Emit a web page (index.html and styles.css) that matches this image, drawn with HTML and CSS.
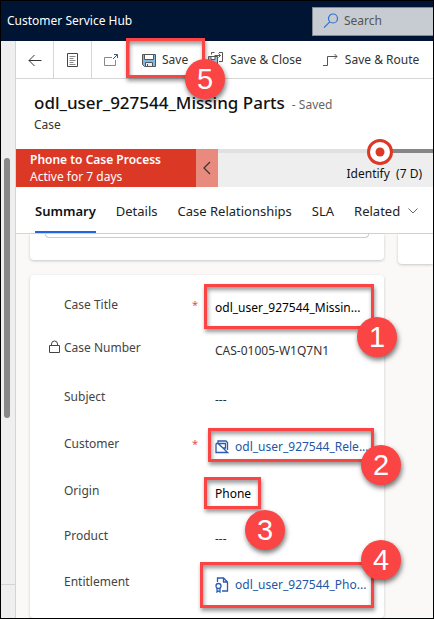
FILE: index.html
```html
<!DOCTYPE html>
<html lang="en">
<head>
<meta charset="utf-8">
<meta name="viewport" content="width=device-width, initial-scale=1">
<title>Customer Service Hub</title>
<link rel="stylesheet" href="styles.css">
</head>
<body>
<div class="app">
  <header class="topbar">
    <span class="brand">Customer Service Hub</span>
    <label class="search">
      <svg width="16" height="16" viewBox="0 0 16 16" fill="none" stroke="#2b70cf" stroke-width="1.2" aria-hidden="true"><circle cx="10" cy="5.5" r="4.5"/><path d="M6.8 8.8L1 14.7"/></svg>
      <input type="text" placeholder="Search" aria-label="Search">
    </label>
  </header>
  <div class="body">
    <aside class="rail"><div class="thumb"></div><div class="rail-foot"></div></aside>
    <main class="main">
      <div class="commands">
        <button class="cmd icon-cmd" aria-label="Back"><svg width="14" height="14" viewBox="0 0 14 14" fill="none" stroke="#333" aria-hidden="true"><path d="M13.5 7.5H1M6.5 2L1 7.5L6.5 13"/></svg></button>
        <button class="cmd icon-cmd" aria-label="Form"><svg width="12" height="16" viewBox="0 0 12 16" fill="none" stroke="#444" aria-hidden="true"><path d="M.5 1.5h10v13H.5z"/><path d="M2.5 4.5h6M2.5 6.5h4M2.5 8.5h6M2.5 10.5h4M2.5 12.5h6" stroke="#888"/></svg></button>
        <button class="cmd icon-cmd" aria-label="Open in new window"><svg width="16" height="14" viewBox="0 0 16 14" fill="none" stroke="#888" aria-hidden="true"><path d="M9 4.500H1.500v8h11V7"/><path d="M10 6l4-4M11 1.500h3.500V5" stroke="#285f91"/></svg></button>
        <button class="cmd save"><svg width="14" height="14" viewBox="0 0 14 14" fill="none" stroke="#555" aria-hidden="true"><path d="M.5 1.5h13v12h-11l-2-2z" fill="#80b8df"/><path d="M2.5 1.5h9v5h-9z" fill="#fff"/><path d="M3.5 9.5h7v4h-7z" fill="#eee"/><path d="M5.5 11v2"/></svg>Save</button>
        <button class="cmd"><svg width="16" height="16" viewBox="0 0 16 16" fill="none" stroke="#555" aria-hidden="true"><path d="M.5 4.5h9v9h-8l-1-1z" fill="#9cc5e2"/><path d="M3 4.5h4v3H3zM3 10.500h4v3H3z" fill="#fff"/><path d="M3.500 2.500v-2h3M11 .5h3.500v9H11"/><path d="M6.500 3.500h6M10.500 1.500l2 2-2 2" stroke="#176cb5"/></svg>Save &amp; Close</button>
        <button class="cmd route"><svg width="16" height="14" viewBox="0 0 16 14" fill="none" stroke="#555" aria-hidden="true"><path d="M0 12.500h4.500v-9H14M11.500 1L14 3.500 11.500 6"/></svg>Save &amp; Route</button>
      </div>
      <div class="heading">
        <div class="title-line"><h1>odl_user_927544_Missing Parts</h1><span class="saved">- Saved</span></div>
        <div class="entity">Case</div>
      </div>
      <section class="process">
        <div class="process-name"><strong>Phone to Case Process</strong><span>Active for 7 days</span></div>
        <button class="collapse" aria-label="Collapse process"><svg width="8" height="14" viewBox="0 0 8 14" fill="none" stroke="#333" stroke-width="1.2" aria-hidden="true"><path d="M7 1L1 7l6 6"/></svg></button>
        <div class="stages">
          <div class="track"></div>
          <svg class="stage-dot" width="26" height="26" viewBox="0 0 26 26" aria-hidden="true"><circle cx="13" cy="13" r="11.500" fill="#fff" stroke="#dc3826" stroke-width="3"/><circle cx="13" cy="13" r="4.500" fill="#dc3826"/></svg>
          <div class="stage">Identify&nbsp; (7 D)</div>
        </div>
      </section>
      <nav class="tabs">
        <a href="#" class="active">Summary</a><a href="#">Details</a><a href="#">Case Relationships</a><a href="#">SLA</a><a href="#">Related<svg width="10" height="6" viewBox="0 0 10 6" fill="none" stroke="#666" aria-hidden="true"><path d="M.5.500L5 5l4.500-4.500"/></svg></a>
      </nav>
      <div class="content">
        <div class="card upper"><div class="inset"></div></div>
        <div class="card side"></div>
        <dl class="card fields">
          <dt>Case Title<span class="req">*</span></dt><dd class="filled">odl_user_927544_Missin...</dd>
          <dt><svg class="lock" width="11" height="14" viewBox="0 0 11 14" fill="none" stroke="#444" aria-hidden="true"><path d="M.5 5.500h10v7H.5zM2.500 5.500V4a3 3 0 0 1 6 0v1.500"/></svg>Case Number</dt><dd>CAS-01005-W1Q7N1</dd>
          <dt>Subject</dt><dd class="empty">---</dd>
          <dt>Customer<span class="req">*</span></dt><dd><a href="#"><svg width="14" height="14" viewBox="0 0 14 14" fill="none" stroke="#2b5cb0" stroke-width="1.300" aria-hidden="true"><path d="M3 3V1h8l1.500 1.500V10M1 3.500h2l5 4.500h2.500v-4.500H3M1 3.500v9h11.500L8 8"/></svg>odl_user_927544_Rele...</a></dd>
          <dt>Origin</dt><dd class="filled">Phone</dd>
          <dt>Product</dt><dd class="empty">---</dd>
          <dt>Entitlement</dt><dd><a href="#"><svg width="14" height="16" viewBox="0 0 14 16" fill="none" stroke="#2b5cb0" stroke-width="1.300" aria-hidden="true"><path d="M2.500 5V1h6l4 4v9H7M8.500 1v4h4"/><circle cx="3.500" cy="9" r="2.500"/><path d="M2 11v4l1.500-1L5 15v-4"/></svg>odl_user_927544_Pho...</a></dd>
        </dl>
      </div>
    </main>
  </div>
  <div class="mark box-save"></div><div class="badge b5">5</div>
  <div class="mark box-title"></div><div class="badge b1">1</div>
  <div class="mark box-customer"></div><div class="badge b2">2</div>
  <div class="mark box-origin"></div><div class="badge b3">3</div>
  <div class="mark box-entitlement"></div><div class="badge b4">4</div>
</div>
</body>
</html>
```
FILE: styles.css
```css
* { box-sizing: border-box; }
body { margin: 0; font: 12px/18px "Noto Sans", sans-serif; color: #333; background: #fff; }
a { color: inherit; text-decoration: none; }
button { font: inherit; color: inherit; border: 0; background: none; padding: 0; }
svg { flex: none; }
.app { position: relative; height: 100vh; display: flex; flex-direction: column; border: 1px solid #000; overflow: hidden; }

.topbar { flex: none; height: 40px; display: flex; align-items: center; justify-content: space-between; background: #001433; color: #fff; padding-left: 6px; }
.search { width: 121px; height: 29px; display: flex; align-items: center; gap: 5px; padding-left: 10px; background: #c7cbd2; border: 1px solid #85898f; border-right: 0; }
.search input { flex: 1; min-width: 0; border: 0; padding: 0; background: none; font: inherit; color: #444; outline: 0; }
.search input::placeholder { color: #555; opacity: 1; }

.body { flex: 1; min-height: 0; display: flex; }
.rail { flex: none; width: 15px; display: flex; flex-direction: column; justify-content: space-between; background: #efefef; border-right: 1px solid #d4d4d4; }
.thumb { width: 6px; height: 260px; margin: 117px 0 0 3px; border-radius: 3px; background: #888; }
.rail-foot { height: 34px; border-top: 1px solid #d4d4d4; }
.main { flex: 1; min-width: 0; display: flex; flex-direction: column; }

.commands { flex: none; height: 38px; display: flex; border-bottom: 1px solid #d6d6d6; }
.cmd { display: flex; align-items: center; gap: 6px; white-space: nowrap; }
.icon-cmd { width: 38px; justify-content: center; border-right: 1px solid #d6d6d6; }
.save { margin: 0 20px 0 12px; }
.route { margin-left: 21px; }

.heading { flex: none; height: 70px; padding: 10px 18px 0; }
.title-line { display: flex; align-items: baseline; gap: 7px; white-space: nowrap; }
h1 { margin: 0; font-size: 17px; line-height: 28px; font-weight: 500; color: #111; }
.saved { color: #666; font-size: 12px; }
.entity { line-height: 16px; }

.process { flex: none; height: 38px; display: flex; background: #eee; }
.process-name { width: 180px; padding: 2px 14px; display: flex; flex-direction: column; line-height: 17px; background: #dc3826; color: #fff; }
.process-name strong { font-weight: 600; white-space: nowrap; }
.collapse { width: 22px; display: flex; align-items: center; justify-content: center; background: #e88a7e; }
.stages { flex: 1; position: relative; text-align: right; }
.track { height: 4px; background: linear-gradient(to right, #e1e1e1 75%, #868686 75%); }
.stage-dot { position: absolute; right: 40px; top: -10px; }
.stage { padding: 12px 11px 0 0; color: #111; }

.tabs { flex: none; height: 47px; display: flex; gap: 20px; padding-left: 19px; font-size: 13px; color: #222; border-bottom: 1px solid #d6d6d6; white-space: nowrap; }
.tabs a { display: flex; align-items: center; gap: 8px; padding-top: 4px; border-bottom: 2px solid transparent; }
.tabs .active { font-weight: 600; color: #111; border-bottom-color: #2266e3; }

.content { flex: 1; min-height: 0; display: grid; grid-template-columns: 354px 1fr; grid-template-rows: 30px 1fr; column-gap: 14px; row-gap: 11px; padding-left: 14px; background: #faf9f8; }
.card { background: #fff; box-shadow: 0 1px 3px #0003; border-radius: 4px; }
.upper { height: 26px; border-radius: 0 0 4px 4px; padding: 0 15px; }
.inset { height: 4px; border: 1px solid #ccc; border-top: 0; border-radius: 0 0 4px 4px; }
.side { border-radius: 0 0 0 4px; }
.fields { margin: 0; padding: 21px 0 0 34px; display: grid; grid-template-columns: 151px 1fr; grid-template-rows: 43px 49px 47px 47px 45px 46px; color: #444; }
dt { display: flex; position: relative; }
.req { margin: 0 17px 0 auto; color: #d55; font-size: 11px; }
.lock { position: absolute; left: -15px; top: 1px; }
dd { margin: 0; padding-top: 3px; color: #333; white-space: nowrap; }
dd.filled { color: #000; }
dd a { display: flex; align-items: center; gap: 6px; color: #2456a6; }

.mark { position: absolute; border: 3px solid #fb4444; box-shadow: 1px 3px 4px #0006, inset 1px 3px 4px #0006; }
.badge { position: absolute; width: 40px; height: 40px; border-radius: 50%; background: #fb4444; color: #fff; font: 29px/40px "Liberation Sans", sans-serif; text-align: center; box-shadow: 1px 3px 5px #0008; }
.box-save { left: 125px; top: 37px; width: 79px; height: 40px; }
.box-title { left: 203px; top: 283px; width: 170px; height: 45px; }
.box-customer { left: 207px; top: 427px; width: 166px; height: 34px; }
.box-origin { left: 203px; top: 476px; width: 57px; height: 32px; }
.box-entitlement { left: 199px; top: 561px; width: 174px; height: 46px; }
.b5 { left: 184px; top: 58px; }
.b1 { left: 356px; top: 316px; }
.b2 { left: 360px; top: 444px; }
.b3 { left: 244px; top: 509px; }
.b4 { left: 360px; top: 539px; }
```
